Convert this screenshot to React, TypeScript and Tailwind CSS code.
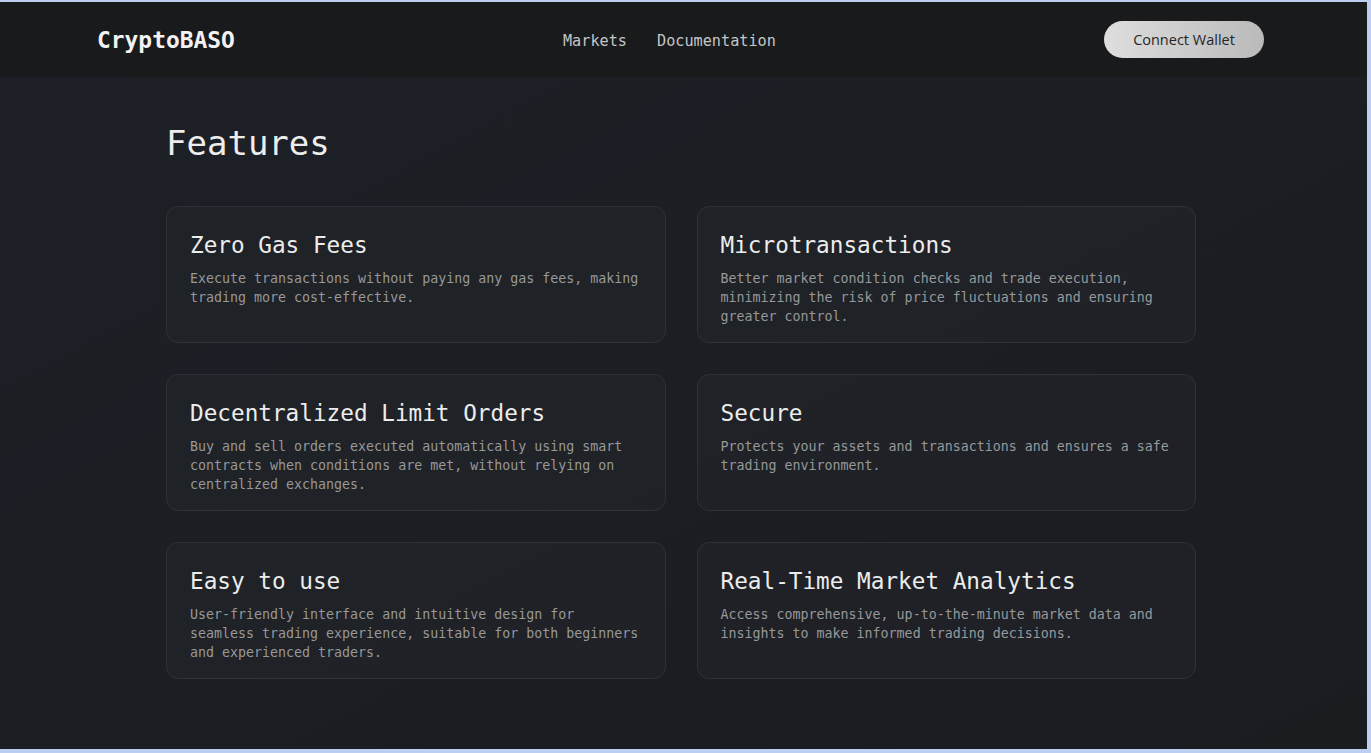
const features = [
  {
    title: 'Zero Gas Fees',
    text: 'Execute transactions without paying any gas fees, making trading more cost-effective.',
  },
  {
    title: 'Microtransactions',
    text: 'Better market condition checks and trade execution, minimizing the risk of price fluctuations and ensuring greater control.',
  },
  {
    title: 'Decentralized Limit Orders',
    text: 'Buy and sell orders executed automatically using smart contracts when conditions are met, without relying on centralized exchanges.',
  },
  {
    title: 'Secure',
    text: 'Protects your assets and transactions and ensures a safe trading environment.',
  },
  {
    title: 'Easy to use',
    text: 'User-friendly interface and intuitive design for seamless trading experience, suitable for both beginners and experienced traders.',
  },
  {
    title: 'Real-Time Market Analytics',
    text: 'Access comprehensive, up-to-the-minute market data and insights to make informed trading decisions.',
  },
];

const mono = { fontFamily: '"DejaVu Sans Mono", "Liberation Mono", monospace' };

function FeatureCard({ title, text }: { title: string; text: string }) {
  return (
    <article className="rounded-xl border border-[#2e3137] bg-[#202228]/90 px-[23px] pt-[25px] pb-[16px]">
      <h3 className="text-[22.7px] leading-[27px] text-[#ececec]">{title}</h3>
      <p className="mt-[10px] max-w-[452px] text-[13.3px] leading-[19px] text-[#97989a]">{text}</p>
    </article>
  );
}

export default function App() {
  return (
    <div className="h-[753px] w-[1371px] overflow-hidden bg-[#bccff0] pt-[2px] pr-[4px] pb-[4px]" style={mono}>
      <div className="flex h-full flex-col bg-gradient-to-br from-[#1d2026] via-[#1b1e23] to-[#1a1c20]">
        <header className="flex h-[75px] shrink-0 items-center justify-between bg-[#191a1c] pl-[97px] pr-[103px]">
          <span className="mt-[1px] text-[22.9px] font-bold text-[#f2f2f2]">CryptoBASO</span>
          <nav className="mt-[3px] flex gap-[30px] text-[15.2px] text-[#c4c5c7]">
            <a>Markets</a>
            <a>Documentation</a>
          </nav>
          <button
            className="h-[37px] w-[160px] rounded-full bg-gradient-to-r from-[#dedede] to-[#bababa] text-[14.5px] text-[#262626]"
            style={{ fontFamily: '"Open Sans", "Noto Sans", sans-serif' }}
          >
            Connect Wallet
          </button>
        </header>
        <main className="ml-[166px] w-[1030px] pt-[46px]">
          <h2 className="text-[34px] leading-[41px] text-[#ededed]">Features</h2>
          <div className="mt-[42px] grid grid-cols-2 gap-[31px]">
            {features.map((f) => (
              <FeatureCard key={f.title} title={f.title} text={f.text} />
            ))}
          </div>
        </main>
      </div>
    </div>
  );
}
